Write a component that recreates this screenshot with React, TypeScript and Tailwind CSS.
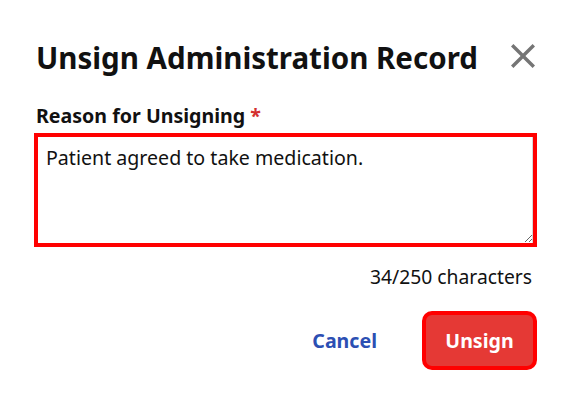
import React from "react";

export default function App() {
  return (
    <div
      className="w-[570px] h-[401px] bg-white pl-[34px] pr-[33px] overflow-hidden"
      style={{ fontFamily: '"Noto Sans", "Open Sans", sans-serif' }}
    >
      <div className="flex items-start justify-between pt-[40px]">
        <h2 className="ml-[2px] text-[29.5px] leading-[35px] font-bold text-[#111111]">
          Unsign Administration Record
        </h2>
        <button className="mt-[4px] mr-[2px]" aria-label="Close">
          <svg width="24" height="24" viewBox="5 5 14 14" fill="#757575">
            <path d="M19 6.41L17.59 5 12 10.59 6.41 5 5 6.41 10.59 12 5 17.59 6.41 19 12 13.41 17.59 19 19 17.59 13.41 12z" />
          </svg>
        </button>
      </div>
      <label className="block ml-[2px] mt-[28px] text-[19.6px] leading-[26px] font-bold text-[#111111]">
        Reason for Unsigning <span className="text-[#d32f2f]">*</span>
      </label>
      <textarea
        className="block mt-[4px] w-full h-[114px] border-4 border-[#ff0000] px-[8px] pt-[7px] text-[19.6px] leading-[28px] text-[#111111] outline-none shadow-[inset_-1px_0_0_#d8d8d8]"
        defaultValue="Patient agreed to take medication."
      />
      <div className="mt-[17px] pr-[5px] text-right text-[19.3px] leading-[26px] text-[#111111]">
        34/250 characters
      </div>
      <div className="mt-[21px] flex items-center justify-end">
        <button className="mr-[29px] px-4 text-[19.6px] leading-[26px] font-bold text-[#2c4fb3]">
          Cancel
        </button>
        <button className="w-[115px] h-[59px] rounded-[10px] border-4 border-[#ff0000] bg-[#e53935] text-[19.6px] leading-[26px] font-bold text-white">
          Unsign
        </button>
      </div>
    </div>
  );
}
